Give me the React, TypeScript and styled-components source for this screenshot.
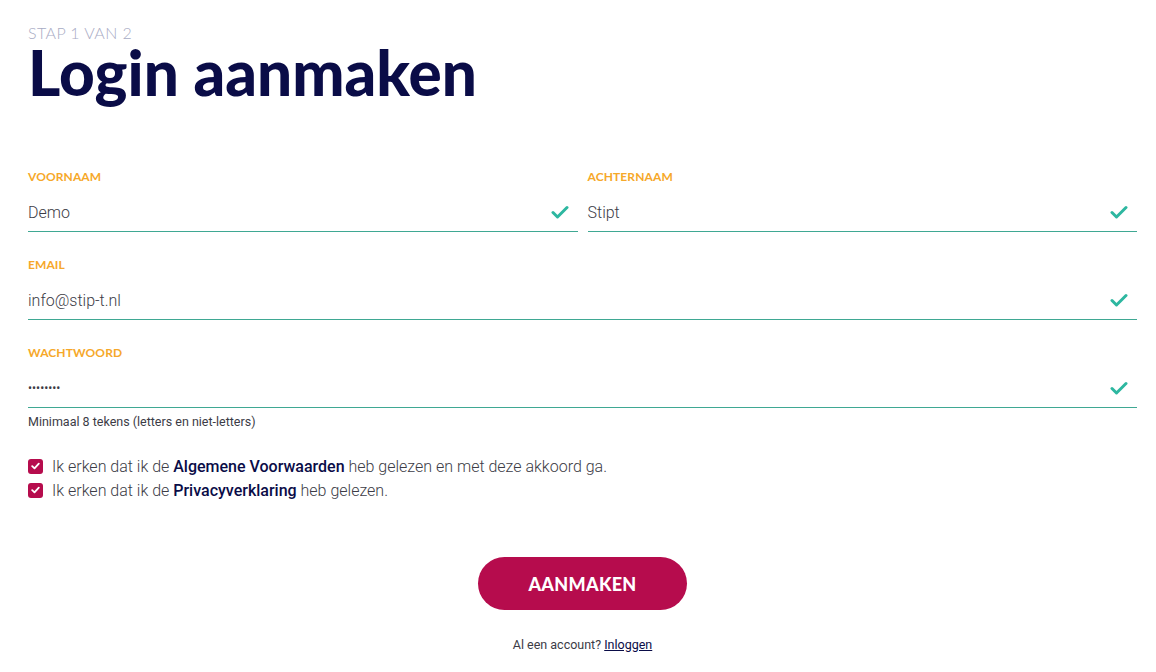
import React from 'react';
import styled, {createGlobalStyle} from "styled-components";

const colors = {
    navy: "#0a0c47",
    orange: "#f6a82a",
    teal: "#2db7a0",
    line: "#3fa893",
    berry: "#b60c4d",
    text: "#3c3c46",
    muted: "#a8abc4",
}

const GlobalStyle = createGlobalStyle`
  html, body {
    margin: 0;
    background: #fff;
  }
  body {
    font-family: Roboto, "Liberation Sans", sans-serif;
  }
`

const Check = () => (
    <svg width="18" height="14" viewBox="0 0 18 14">
        <path d="M2 7.5 L6.5 12 L16 2.5" fill="none" stroke={colors.teal} strokeWidth="3" strokeLinecap="round" strokeLinejoin="round"/>
    </svg>
)

type FieldProps = { label: string, value: string, password?: boolean, hint?: string }

const Field = ({label, value, password, hint}: FieldProps) => (
    <StyledField>
        <Label>{label}</Label>
        <InputRow>
            <Value password={password}>{value}</Value>
            <Check/>
        </InputRow>
        {hint && <Hint>{hint}</Hint>}
    </StyledField>
)

const Agree = ({before, strong, after}: { before: string, strong: string, after: string }) => (
    <AgreeRow>
        <Box>
            <svg width="9" height="8" viewBox="0 0 9 8">
                <path d="M1.2 4.2 L3.5 6.4 L7.8 1.6" fill="none" stroke="#fff" strokeWidth="1.8" strokeLinecap="round" strokeLinejoin="round"/>
            </svg>
        </Box>
        <span>{before}<Strong>{strong}</Strong>{after}</span>
    </AgreeRow>
)

export default function App() {
    return (
        <StyledPage>
            <GlobalStyle/>
            <Step>STAP 1 VAN 2</Step>
            <Title>Login aanmaken</Title>
            <Form>
                <Fields>
                    <TwoCols>
                        <Field label="Voornaam" value="Demo"/>
                        <Field label="Achternaam" value="Stipt"/>
                    </TwoCols>
                    <Field label="Email" value="info@stip-t.nl"/>
                    <Field label="Wachtwoord" value="••••••••" password
                           hint="Minimaal 8 tekens (letters en niet-letters)"/>
                </Fields>
                <Agreements>
                    <Agree before="Ik erken dat ik de " strong="Algemene Voorwaarden" after=" heb gelezen en met deze akkoord ga."/>
                    <Agree before="Ik erken dat ik de " strong="Privacyverklaring" after=" heb gelezen."/>
                </Agreements>
                <Submit>AANMAKEN</Submit>
                <Footer>Al een account? <a href="#">Inloggen</a></Footer>
            </Form>
        </StyledPage>
    );
}

const StyledPage = styled.main`
  padding: 24px 19px 0 28px;
`

const Step = styled.div`
  font-family: Lato, "Open Sans", sans-serif;
  font-weight: 300;
  font-size: 16px;
  line-height: 17px;
  color: ${colors.muted};
  letter-spacing: 0.4px;
`

const Title = styled.h1`
  margin: 0;
  font-family: Lato, "Open Sans", sans-serif;
  font-weight: 900;
  font-size: 62px;
  line-height: 62px;
  color: ${colors.navy};
`

const Form = styled.form`
  display: flex;
  flex-direction: column;
  margin-top: 67px;
`

const Fields = styled.div`
  display: flex;
  flex-direction: column;
  gap: 26px;
`

const TwoCols = styled.div`
  display: grid;
  grid-template-columns: 1fr 1fr;
  gap: 10px;
`

const StyledField = styled.div`
  display: flex;
  flex-direction: column;
`

const Label = styled.label`
  font-family: Lato, "Open Sans", sans-serif;
  font-weight: 700;
  font-size: 12px;
  line-height: 14px;
  letter-spacing: 0.1px;
  color: ${colors.orange};
  text-transform: uppercase;
`

const InputRow = styled.div`
  display: flex;
  align-items: center;
  justify-content: space-between;
  height: 38px;
  margin-top: 9px;
  padding-right: 9px;
  border-bottom: 1px solid ${colors.line};
`

const Value = styled.span<{ password?: boolean }>`
  font-size: ${p => p.password ? "12px" : "16px"};
  font-weight: ${p => p.password ? 400 : 300};
  color: ${colors.text};
`

const Hint = styled.div`
  margin-top: 6px;
  font-size: 12.5px;
  line-height: 15px;
  color: ${colors.text};
`

const Agreements = styled.div`
  display: flex;
  flex-direction: column;
  gap: 4px;
  margin-top: 27px;
`

const AgreeRow = styled.div`
  display: flex;
  align-items: center;
  gap: 9px;
  height: 20px;
  font-size: 16px;
  font-weight: 300;
  color: ${colors.text};
`

const Box = styled.span`
  display: flex;
  align-items: center;
  justify-content: center;
  width: 15px;
  height: 15px;
  border-radius: 3px;
  background: ${colors.berry};
`

const Strong = styled.strong`
  font-weight: 500;
  color: ${colors.navy};
`

const Submit = styled.button`
  align-self: center;
  margin-top: 57px;
  width: 209px;
  height: 53px;
  border: none;
  border-radius: 27px;
  background: ${colors.berry};
  color: #fff;
  font-family: Lato, "Open Sans", sans-serif;
  font-weight: 900;
  font-size: 18px;
  letter-spacing: 0.3px;
`

const Footer = styled.div`
  align-self: center;
  margin-top: 27px;
  font-size: 12.5px;
  color: ${colors.text};

  a {
    color: ${colors.navy};
  }
`
